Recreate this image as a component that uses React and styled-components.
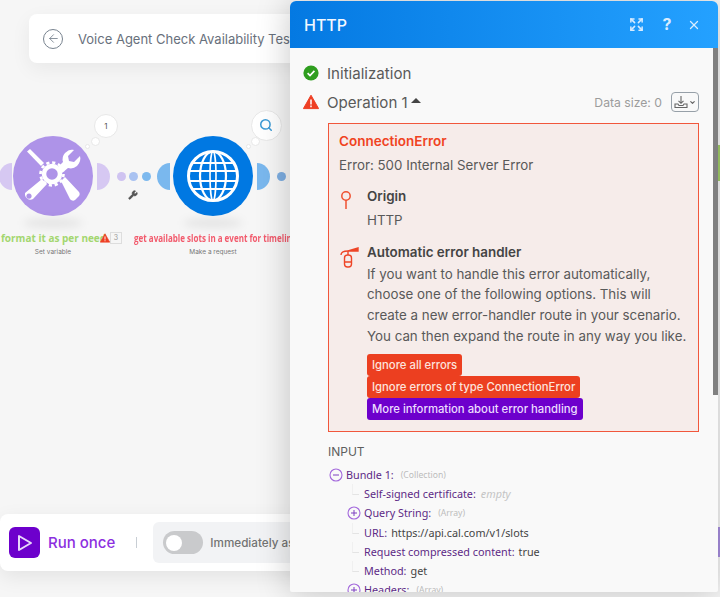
import React from "react";
import styled, { createGlobalStyle } from "styled-components";
import { Expand, X, Search, ArrowLeft, Wrench, ChevronDown } from "lucide-react";

const GlobalStyle = createGlobalStyle`
  html, body {
    margin: 0;
    padding: 0;
    background: #f6f6f6;
    font-family: "Inter", "Liberation Sans", sans-serif;
  }
`;

const Stage = styled.div`
  position: relative;
  width: 720px;
  height: 597px;
  overflow: hidden;
  background: #f6f6f6;
`;

/* top left scenario title */
const TitleBar = styled.div`
  position: absolute;
  left: 29px;
  top: 14px;
  width: 420px;
  height: 49px;
  padding-left: 14px;
  box-sizing: border-box;
  display: flex;
  align-items: center;
  gap: 15px;
  background: #fff;
  border-radius: 8px;
  box-shadow: 0 6px 20px rgba(0, 0, 0, 0.06);
  color: #68707c;
  font-size: 13px;
  white-space: nowrap;
`;

const BackCircle = styled.div`
  width: 18px;
  height: 18px;
  border: 1.5px solid #78838f;
  border-radius: 50%;
  display: flex;
  align-items: center;
  justify-content: center;
  color: #78838f;
`;

/* diagram */
const Moon = styled.div`
  position: absolute;
  left: ${(p) => p.$x}px;
  top: 163px;
  width: 13px;
  height: 27px;
  background: ${(p) => p.$color};
  border-radius: ${(p) => (p.$side === "left" ? "100% 0 0 100% / 50%" : "0 100% 100% 0 / 50%")};
`;

const Dot = styled.div`
  position: absolute;
  left: ${(p) => p.$x - 4.5}px;
  top: 172px;
  width: 9px;
  height: 9px;
  border-radius: 50%;
  background: ${(p) => p.$color};
`;

const NodeCircle = styled.div`
  position: absolute;
  left: ${(p) => p.$x - 40}px;
  top: 136px;
  width: 80px;
  height: 80px;
  border-radius: 50%;
  background: ${(p) => p.$color};
  display: flex;
  align-items: center;
  justify-content: center;
  &::after {
    content: "";
    position: absolute;
    left: 10px;
    top: 82px;
    width: 60px;
    height: 10px;
    border-radius: 50%;
    background: rgba(0, 0, 0, 0.07);
    filter: blur(4px);
  }
`;

const NodeLabel = styled.div`
  position: absolute;
  left: ${(p) => p.$x}px;
  top: 231px;
  font-family: "Open Sans", sans-serif;
  font-size: ${(p) => p.$size}px;
  font-weight: 700;
  color: ${(p) => p.$color};
  white-space: nowrap;
  line-height: 15px;
  transform: scaleX(${(p) => p.$squeeze || 1});
  transform-origin: left center;
`;

const NodeCaption = styled.div`
  position: absolute;
  left: ${(p) => p.$x - 50}px;
  top: 248px;
  width: 100px;
  text-align: center;
  font-size: 6.5px;
  color: #777;
  line-height: 9px;
`;

const Bubble = styled.div`
  position: absolute;
  left: ${(p) => p.$x - p.$r}px;
  top: ${(p) => p.$y - p.$r}px;
  width: ${(p) => p.$r * 2}px;
  height: ${(p) => p.$r * 2}px;
  box-sizing: border-box;
  border-radius: 50%;
  background: #fff;
  border: 1px solid #e8e8e8;
  display: flex;
  align-items: center;
  justify-content: center;
  font-size: 8px;
  color: #555;
`;

const WarnCount = styled.div`
  position: absolute;
  left: 110px;
  top: 232px;
  width: 12px;
  height: 12px;
  box-sizing: border-box;
  border: 1px solid #ddd;
  font-size: 7px;
  line-height: 10px;
  text-align: center;
  color: #999;
`;

const SmallIcon = styled.div`
  position: absolute;
  left: ${(p) => p.$x}px;
  top: ${(p) => p.$y}px;
  display: flex;
  color: ${(p) => p.$color || "#555"};
`;

const EdgeStrip = styled.div`
  position: absolute;
  left: 718px;
  top: ${(p) => p.$y}px;
  width: 2px;
  height: ${(p) => p.$h}px;
  background: ${(p) => p.$color};
`;

/* bottom run bar */
const RunBar = styled.div`
  position: absolute;
  left: 0;
  top: 514px;
  width: 440px;
  height: 57px;
  display: flex;
  align-items: center;
  padding-left: 9px;
  box-sizing: border-box;
  background: #fff;
  border-radius: 8px;
  box-shadow: 0 6px 20px rgba(0, 0, 0, 0.08);
`;

const RunButton = styled.div`
  width: 31px;
  height: 31px;
  border-radius: 6px;
  background: #6d00cc;
  display: flex;
  align-items: center;
  justify-content: center;
`;

const RunText = styled.div`
  margin-left: 8px;
  font-size: 15px;
  font-weight: 500;
  color: #8c2fe0;
  white-space: nowrap;
`;

const Divider = styled.div`
  width: 1px;
  height: 11px;
  margin: 0 16px 0 21px;
  background: #c8ced4;
`;

const TogglePanel = styled.div`
  width: 270px;
  height: 41px;
  padding-left: 10px;
  box-sizing: border-box;
  border-radius: 6px;
  background: #f2f3f5;
  display: flex;
  align-items: center;
  gap: 7px;
  font-size: 11.7px;
  font-weight: 500;
  color: #737373;
  white-space: nowrap;
`;

const Toggle = styled.div`
  width: 40px;
  height: 23px;
  padding-left: 3px;
  box-sizing: border-box;
  border-radius: 12px;
  background: #c9cacc;
  display: flex;
  align-items: center;
  &::before {
    content: "";
    width: 16px;
    height: 16px;
    border-radius: 50%;
    background: #fff;
  }
`;

/* the module window */
const Panel = styled.div`
  position: absolute;
  left: 290px;
  top: 1px;
  width: 428px;
  height: 591px;
  display: flex;
  flex-direction: column;
  overflow: hidden;
  background: #f9f9f9;
  border-radius: 6px 6px 2px 2px;
  box-shadow: 0 0 34px rgba(0, 0, 0, 0.22);
`;

const PanelHeader = styled.div`
  flex: none;
  height: 47px;
  padding: 0 17px 0 14px;
  display: flex;
  align-items: center;
  background: linear-gradient(90deg, #0479e2, #24a1ff);
  color: #fff;
`;

const PanelTitle = styled.div`
  flex: 1;
  font-size: 16px;
  font-weight: 500;
  color: #f2f8ff;
`;

const HeaderIcons = styled.div`
  display: flex;
  align-items: center;
  gap: 15px;
  color: #d8ecff;
`;

const HelpGlyph = styled.span`
  margin: 0 -2px 0 1px;
  font-size: 16px;
  font-weight: 700;
  width: 14px;
  text-align: center;
  line-height: 15px;
`;

const PanelBody = styled.div`
  position: relative;
  flex: 1;
  padding: 15px 19px 0 13px;
  overflow: hidden;
`;

const ScrollThumb = styled.div`
  position: absolute;
  right: 0;
  top: 0;
  width: 5px;
  height: 347px;
  background: #808080;
`;

const StatusRow = styled.div`
  display: flex;
  align-items: center;
  height: 20px;
  margin-bottom: 9px;
  font-size: 15.1px;
  color: #5a5a5a;
`;

const StatusIcon = styled.div`
  width: 24px;
  display: flex;
`;

const Caret = styled.span`
  width: 0;
  height: 0;
  margin: 0 0 3px 3px;
  border-left: 5px solid transparent;
  border-right: 5px solid transparent;
  border-bottom: 5px solid #444;
`;

const DataSize = styled.div`
  margin-left: auto;
  font-size: 12.2px;
  color: #9c9c9c;
`;

const BundleButton = styled.div`
  width: 28px;
  height: 20px;
  margin-left: 9px;
  box-sizing: border-box;
  border: 1px solid #97a0a8;
  border-radius: 4px;
  display: flex;
  align-items: center;
  justify-content: center;
  gap: 1px;
  color: #666;
`;

const ErrorBox = styled.div`
  margin: 11px 0 0 25px;
  width: 371px;
  height: 309px;
  padding: 8px 10px 0;
  box-sizing: border-box;
  background: #f6ecea;
  border: 1px solid #f1573c;
`;

const ErrorTitle = styled.div`
  font-size: 13.5px;
  font-weight: 600;
  line-height: 18px;
  color: #f0431f;
`;

const ErrorText = styled.div`
  margin-top: 6px;
  font-size: 13.3px;
  line-height: 18px;
  color: #595959;
`;

const Section = styled.div`
  display: flex;
  margin-top: ${(p) => p.$top}px;
`;

const SectionIcon = styled.div`
  width: 28px;
  flex: none;
  display: flex;
  padding-top: 3px;
`;

const SectionTitle = styled.div`
  font-size: 13.4px;
  font-weight: 600;
  line-height: 18px;
  color: #444;
`;

const SectionText = styled.div`
  margin-top: ${(p) => p.$top}px;
  font-size: 13.33px;
  line-height: 20.7px;
  color: #595959;
  white-space: nowrap;
`;

const ButtonStack = styled.div`
  display: flex;
  flex-direction: column;
  align-items: flex-start;
  margin-top: 7px;
`;

const ActionButton = styled.div`
  height: 22.3px;
  padding: 0 5px;
  display: flex;
  align-items: center;
  border-radius: 3px;
  background: ${(p) => p.$color};
  color: ${(p) => p.$text};
  font-size: 11.3px;
  font-weight: 500;
  white-space: nowrap;
`;

const InputHeading = styled.div`
  margin: 12px 0 6px 25px;
  font-size: 12px;
  line-height: 15px;
  color: #5e5e5e;
`;

const Tree = styled.div`
  margin-left: 26px;
  font-family: "Noto Sans", sans-serif;
  font-size: 10.8px;
`;

const TreeRow = styled.div`
  position: relative;
  display: flex;
  align-items: center;
  height: 19.2px;
  padding-left: ${(p) => p.$indent}px;
  white-space: nowrap;
  &::before {
    content: ${(p) => (p.$tick ? '""' : "none")};
    position: absolute;
    left: 23px;
    top: 0;
    width: 6px;
    height: 10px;
    border-left: 1px solid #f0f0f0;
    border-bottom: 1px solid #e4e4e4;
  }
`;

const TreeKey = styled.span`
  color: #5d2a86;
  margin-right: 4px;
`;

const TreeValue = styled.span`
  color: #444;
`;

const TreeType = styled.span`
  margin-left: 3px;
  color: #bcbcbc;
  font-size: 8.6px;
`;

const TreeEmpty = styled.span`
  margin-left: 1px;
  color: #c4c4c4;
  font-style: italic;
`;

const ToggleGlyph = ({ plus }) => (
  <svg width="14" height="14" viewBox="0 0 14 14" style={{ marginRight: 3, flex: "none" }}>
    <circle cx="7" cy="7" r="6" fill="none" stroke="#a368dc" strokeWidth="1.1" />
    <path d="M4 7h6" stroke="#7d3fc0" strokeWidth="1" />
    {plus && <path d="M7 4v6" stroke="#7d3fc0" strokeWidth="1" />}
  </svg>
);

const ToolsIcon = () => (
  <svg width="56" height="56" viewBox="0 0 56 56">
    <g fill="#fff" stroke="none">
      {/* screwdriver */}
      <path d="M2 3.5 5 1 19 15l-3 3z" />
      <path d="M36 33l4-4 14 15a3.5 3.5 0 0 1-1 5l-3 3a3.5 3.5 0 0 1-5-1z" />
      {/* wrench */}
      <path d="M33 19l5-5a9.5 9.5 0 0 1 2-9c3-3 6-4 9-3l-6 6 1 5 5 1 6-6c1 3 0 7-3 10a9.5 9.5 0 0 1-9 2l-6 5z" />
      <path fillRule="evenodd" d="M17 31l5 5L8 51a5.6 5.6 0 0 1-8-6zM4 45.5a2.6 2.6 0 1 0 0.01 0z" />
    </g>
    <circle cx="27" cy="26" r="8" fill="none" stroke="#fff" strokeWidth="4.5" />
    <circle cx="27" cy="26" r="11.5" fill="none" stroke="#fff" strokeWidth="2.6" strokeDasharray="3.2 2.8" />
  </svg>
);

const GlobeIcon = () => (
  <svg width="54" height="54" viewBox="0 0 54 54" fill="none" stroke="#fff" strokeWidth="2.2">
    <circle cx="27" cy="27" r="24.5" strokeWidth="3" />
    <ellipse cx="27" cy="27" rx="13" ry="24.5" />
    <ellipse cx="27" cy="27" rx="3" ry="24.5" strokeWidth="1.6" />
    <path d="M7 14h40M3 22h48M3 32h48M7 40h40" />
  </svg>
);

const WarnTriangle = ({ size }) => (
  <svg width={size} height={size} viewBox="0 0 16 16">
    <path d="M8 1.2 15.6 14.6H.4z" fill="#ee3f24" stroke="#ee3f24" strokeLinejoin="round" />
    <path d="M8 5.5v5M8 11.6v1.6" stroke="#fff" strokeWidth="1.5" />
  </svg>
);

const CheckBadge = () => (
  <svg width="16" height="16" viewBox="0 0 16 16">
    <circle cx="8" cy="8" r="7.6" fill="#2f9e1f" />
    <path d="M4.6 8.2 7 10.5l4.4-4.6" fill="none" stroke="#fff" strokeWidth="1.7" />
  </svg>
);

const OriginIcon = () => (
  <svg width="14" height="20" viewBox="0 0 14 20" fill="none" stroke="#ef5030" strokeWidth="1.5">
    <circle cx="7" cy="6" r="4.2" />
    <path d="M7 10v9" />
  </svg>
);

const ExtinguisherIcon = () => (
  <svg width="22" height="22" viewBox="0 0 22 22" fill="none" stroke="#ee4527" strokeWidth="1.4">
    <rect x="5.5" y="9" width="7" height="12" rx="3" />
    <path d="M5.5 16h7M9 9V5" />
    <path d="M2 9c0-3 2-4 7-4" />
    <path d="M9 5l10-3v3z" fill="#ee4527" />
  </svg>
);

const TrayIcon = () => (
  <svg width="14" height="14" viewBox="0 0 14 14" fill="none" stroke="#666" strokeWidth="1.1">
    <path d="M7 1v7M4.5 5.8 7 8.3l2.5-2.5" />
    <path d="M1 9h3l1 1.5h4L10 9h3v3.5H1z" />
  </svg>
);

const TREE_ROWS = [
  { indent: 35, tick: true, label: "Self-signed certificate:", empty: "empty" },
  { indent: 18, plus: true, label: "Query String:", type: "(Array)" },
  { indent: 35, tick: true, label: "URL:", value: "https://api.cal.com/v1/slots" },
  { indent: 35, tick: true, label: "Request compressed content:", value: "true" },
  { indent: 35, tick: true, label: "Method:", value: "get" },
  { indent: 18, plus: true, label: "Headers:", type: "(Array)" },
];

export default function App() {
  return (
    <Stage>
      <GlobalStyle />

      <Moon $x={-1} $side="left" $color="#d6c8f2" />
      <Moon $x={97} $side="right" $color="#d6c8f2" />
      <Moon $x={157} $side="left" $color="#7ab8ee" />
      <Moon $x={257} $side="right" $color="#7ab8ee" />
      <Dot $x={121} $color="#cfc3f1" />
      <Dot $x={133} $color="#a9c2f1" />
      <Dot $x={146} $color="#7db9ee" />
      <Dot $x={281} $color="#7daee2" />
      <SmallIcon $x={128} $y={190}><Wrench size={10} fill="#555" /></SmallIcon>

      <NodeCircle $x={53} $color="#ae93e8"><ToolsIcon /></NodeCircle>
      <NodeCircle $x={213} $color="#0078e2"><GlobeIcon /></NodeCircle>

      <Bubble $x={87} $y={146} $r={2.5} />
      <Bubble $x={95} $y={141} $r={4.5} />
      <Bubble $x={106} $y={126} $r={12}>1</Bubble>
      <Bubble $x={248} $y={146} $r={2.5} />
      <Bubble $x={255} $y={141} $r={4.5} />
      <Bubble $x={266} $y={125} $r={15.5}>
        <Search size={14} color="#3c9bd6" strokeWidth={2.6} />
      </Bubble>

      <NodeLabel $x={1} $size={10} $color="#a3d66f">format it as per need</NodeLabel>
      <SmallIcon $x={100} $y={233}><WarnTriangle size={10} /></SmallIcon>
      <WarnCount>3</WarnCount>
      <NodeLabel $x={134} $size={10} $squeeze={0.8} $color="#f25a6c">get available slots in a event for timelin</NodeLabel>
      <NodeCaption $x={53}>Set variable</NodeCaption>
      <NodeCaption $x={213}>Make a request</NodeCaption>

      <TitleBar>
        <BackCircle><ArrowLeft size={13} strokeWidth={1.6} /></BackCircle>
        Voice Agent Check Availability Test
      </TitleBar>

      <RunBar>
        <RunButton>
          <svg width="16" height="18" viewBox="0 0 16 18">
            <path d="M2 2v14l12-7z" fill="none" stroke="#e8d8fa" strokeWidth="2" strokeLinejoin="round" />
          </svg>
        </RunButton>
        <RunText>Run once</RunText>
        <Divider />
        <TogglePanel>
          <Toggle />
          Immediately as data arrives
        </TogglePanel>
      </RunBar>

      <EdgeStrip $y={145} $h={36} $color="#a3cf6a" />
      <EdgeStrip $y={527} $h={30} $color="#a88fe0" />

      <Panel>
        <PanelHeader>
          <PanelTitle>HTTP</PanelTitle>
          <HeaderIcons>
            <Expand size={15} strokeWidth={2.4} />
            <HelpGlyph>?</HelpGlyph>
            <X size={14} strokeWidth={2.2} />
          </HeaderIcons>
        </PanelHeader>
        <PanelBody>
          <ScrollThumb />
          <StatusRow>
            <StatusIcon><CheckBadge /></StatusIcon>
            Initialization
          </StatusRow>
          <StatusRow>
            <StatusIcon><WarnTriangle size={16} /></StatusIcon>
            Operation 1
            <Caret />
            <DataSize>Data size: 0</DataSize>
            <BundleButton>
              <TrayIcon />
              <ChevronDown size={7} strokeWidth={4} />
            </BundleButton>
          </StatusRow>
          <ErrorBox>
            <ErrorTitle>ConnectionError</ErrorTitle>
            <ErrorText>Error: 500 Internal Server Error</ErrorText>
            <Section $top={13}>
              <SectionIcon><OriginIcon /></SectionIcon>
              <div>
                <SectionTitle>Origin</SectionTitle>
                <SectionText $top={5}>HTTP</SectionText>
              </div>
            </Section>
            <Section $top={12}>
              <SectionIcon><ExtinguisherIcon /></SectionIcon>
              <div>
                <SectionTitle>Automatic error handler</SectionTitle>
                <SectionText $top={3}>
                  If you want to handle this error automatically,
                  <br />
                  choose one of the following options. This will
                  <br />
                  create a new error-handler route in your scenario.
                  <br />
                  You can then expand the route in any way you like.
                </SectionText>
                <ButtonStack>
                  <ActionButton $color="#ec3f20" $text="#fde3dc">Ignore all errors</ActionButton>
                  <ActionButton $color="#ec3f20" $text="#fde3dc">Ignore errors of type ConnectionError</ActionButton>
                  <ActionButton $color="#6d00cc" $text="#ecdcff">More information about error handling</ActionButton>
                </ButtonStack>
              </div>
            </Section>
          </ErrorBox>
          <InputHeading>INPUT</InputHeading>
          <Tree>
            <TreeRow $indent={0}>
              <ToggleGlyph />
              <TreeKey>Bundle 1:</TreeKey>
              <TreeType>(Collection)</TreeType>
            </TreeRow>
            {TREE_ROWS.map((row) => (
              <TreeRow key={row.label} $indent={row.indent} $tick={row.tick}>
                {row.plus && <ToggleGlyph plus />}
                <TreeKey>{row.label}</TreeKey>
                {row.value && <TreeValue>{row.value}</TreeValue>}
                {row.type && <TreeType>{row.type}</TreeType>}
                {row.empty && <TreeEmpty>{row.empty}</TreeEmpty>}
              </TreeRow>
            ))}
          </Tree>
        </PanelBody>
      </Panel>
    </Stage>
  );
}
